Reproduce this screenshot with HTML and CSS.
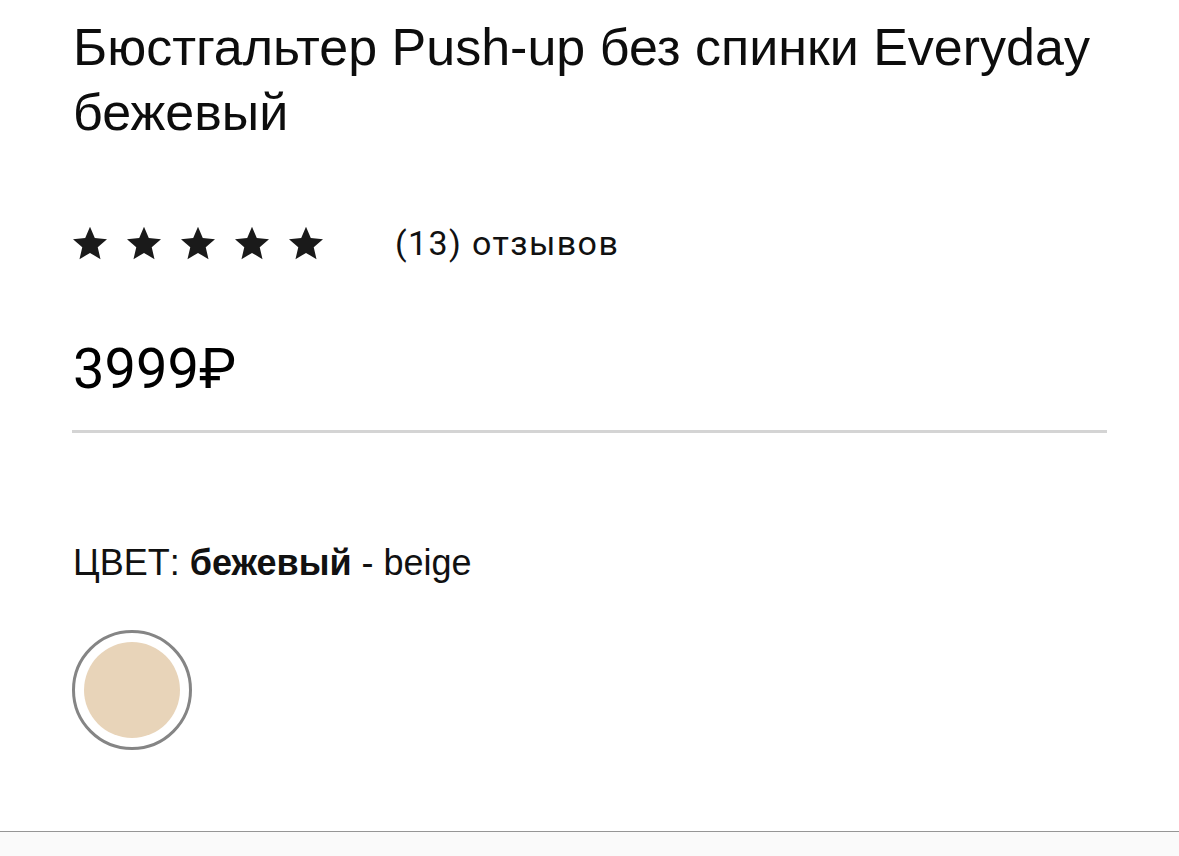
FILE: index.html
```html
<!DOCTYPE html>
<html lang="ru">
<head>
    <meta charset="UTF-8">
    <meta name="viewport" content="width=device-width, initial-scale=1.0">
    <title>Бюстгальтер Push-up без спинки Everyday</title>
    <link rel="stylesheet" href="styles.css">
</head>
<body>
    <div class="product">
        <h1 class="product-title">Бюстгальтер Push-up без спинки Everyday бежевый</h1>

        <div class="rating">
            <div class="stars">
                <svg class="star" viewBox="1 1.5 22 21"><path d="M12 1.5l3.1 7.3 7.9.7-6 5.2 1.8 7.8L12 18.4l-6.8 4.1L7 14.7 1 9.5l7.9-.7z"/></svg>
                <svg class="star" viewBox="1 1.5 22 21"><path d="M12 1.5l3.1 7.3 7.9.7-6 5.2 1.8 7.8L12 18.4l-6.8 4.1L7 14.7 1 9.5l7.9-.7z"/></svg>
                <svg class="star" viewBox="1 1.5 22 21"><path d="M12 1.5l3.1 7.3 7.9.7-6 5.2 1.8 7.8L12 18.4l-6.8 4.1L7 14.7 1 9.5l7.9-.7z"/></svg>
                <svg class="star" viewBox="1 1.5 22 21"><path d="M12 1.5l3.1 7.3 7.9.7-6 5.2 1.8 7.8L12 18.4l-6.8 4.1L7 14.7 1 9.5l7.9-.7z"/></svg>
                <svg class="star" viewBox="1 1.5 22 21"><path d="M12 1.5l3.1 7.3 7.9.7-6 5.2 1.8 7.8L12 18.4l-6.8 4.1L7 14.7 1 9.5l7.9-.7z"/></svg>
            </div>
            <a class="reviews" href="#reviews">(13) отзывов</a>
        </div>

        <p class="price">3999₽</p>

        <hr class="divider">

        <p class="color-label">ЦВЕТ: <b>бежевый</b> - beige</p>

        <div class="swatches">
            <button class="swatch active" title="beige"><span class="swatch-fill"></span></button>
        </div>
    </div>

    <div class="bottom-bar"></div>
</body>
</html>
```

FILE: styles.css
```css
body {
    margin: 0;
    background-color: #fff;
    font-family: 'Liberation Sans', Arial, sans-serif;
    color: #111;
}

.product {
    padding: 15px 72px 0 73px;
    height: 831px;
    box-sizing: border-box;
}

.product-title {
    font-size: 52px;
    font-weight: normal;
    line-height: 65px;
    margin: 0;
    color: #0d0d0d;
}

.rating {
    display: flex;
    align-items: center;
    margin-top: 80px;
}

.stars {
    display: flex;
    gap: 20px;
}

.star {
    width: 34px;
    height: 34px;
    fill: #1a1a1a;
}

.reviews {
    margin-left: 72px;
    font-family: Roboto, sans-serif;
    font-size: 34px;
    line-height: 36px;
    letter-spacing: 1.4px;
    color: #111;
    text-decoration: none;
}

.price {
    font-family: Roboto, sans-serif;
    font-size: 56px;
    margin: 74px 0 0;
    line-height: 68px;
    color: #000;
}

.divider {
    border: none;
    height: 3px;
    background-color: #d4d4d4;
    margin: 27px 0 0 -1px;
}

.color-label {
    font-size: 36px;
    margin: 110px 0 0;
    line-height: 40px;
    color: #111;
}

.swatches {
    display: flex;
    margin-top: 47px;
}

.swatch {
    width: 120px;
    height: 120px;
    padding: 9px;
    margin-left: -1px;
    border: 3px solid #858585;
    border-radius: 50%;
    background-color: #fff;
    box-sizing: border-box;
    cursor: pointer;
}

.swatch-fill {
    display: block;
    width: 100%;
    height: 100%;
    border-radius: 50%;
    background-color: #e8d4b9;
}

.bottom-bar {
    border-top: 1px solid #969696;
    height: 40px;
    background-color: #fafafa;
}
```
